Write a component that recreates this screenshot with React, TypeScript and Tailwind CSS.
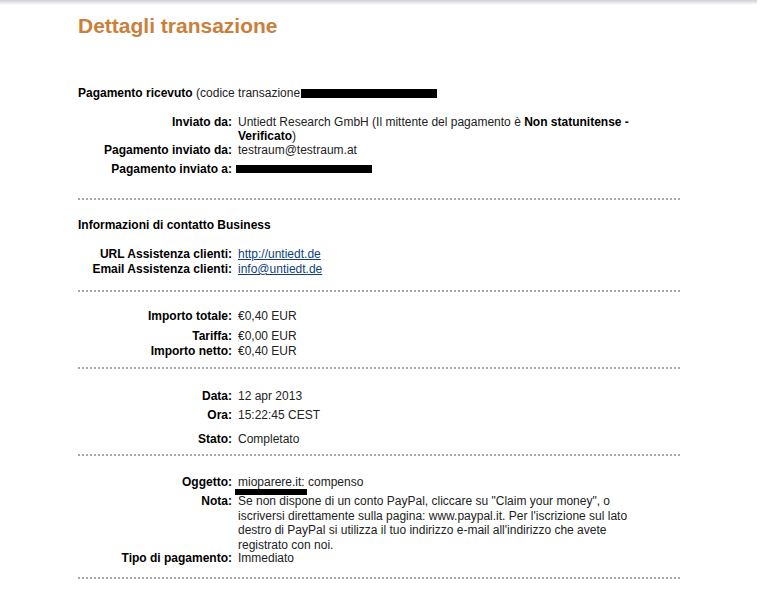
const font = { fontFamily: '"Liberation Sans", Arial, sans-serif' }

function Row({ label, children, className = '' }: { label: string; children: React.ReactNode; className?: string }) {
  return (
    <div className={`flex leading-[14px] ${className}`}>
      <div className="w-[154px] shrink-0 text-right font-bold text-black">{label}</div>
      <div className="ml-[6px] w-[400px] text-[#222]">{children}</div>
    </div>
  )
}

function Dots({ className = '' }: { className?: string }) {
  return <div className={`w-[602px] border-t-2 border-dotted border-[#a8a8a8] ${className}`} />
}

export default function App() {
  return (
    <div className="min-h-[592px] w-[760px] bg-white text-[12px]" style={font}>
      <div className="h-[5px] w-[757px] bg-gradient-to-b from-[#cdd0d6] to-white" />
      <div className="pl-[78px]">
        <h1 className="mt-[9px] text-[21px] font-bold leading-[24px] text-[#ca7f3b]">Dettagli transazione</h1>

        <div className="mt-[48px] leading-[14px] text-[#222]">
          <span className="font-bold text-black">Pagamento ricevuto</span> (codice transazione
          <span className="ml-[1px] inline-block h-[9px] w-[136px] bg-black align-[-1px]" />
        </div>

        <Row label="Inviato da:" className="mt-[15px]">
          <span>Untiedt Research GmbH (Il mittente del pagamento è </span>
          <b className="text-black">Non statunitense - Verificato</b>)
        </Row>
        <Row label="Pagamento inviato da:">testraum@testraum.at</Row>
        <Row label="Pagamento inviato a:" className="mt-[5px]">
          <span className="ml-[-2px] inline-block h-[8px] w-[136px] bg-black align-[0px]" />
        </Row>

        <Dots className="mt-[22px]" />

        <div className="mt-[18px] font-bold leading-[14px] text-black">Informazioni di contatto Business</div>

        <Row label="URL Assistenza clienti:" className="mt-[15px]">
          <a href="#" className="text-[#0f3f7e] underline">http://untiedt.de</a>
        </Row>
        <Row label="Email Assistenza clienti:" className="mt-[1px]">
          <a href="#" className="text-[#0f3f7e] underline">info@untiedt.de</a>
        </Row>

        <Dots className="mt-[14px]" />

        <Row label="Importo totale:" className="mt-[17px]">€0,40 EUR</Row>
        <Row label="Tariffa:" className="mt-[6px]">€0,00 EUR</Row>
        <Row label="Importo netto:" className="mt-[1px]">€0,40 EUR</Row>

        <Dots className="mt-[9px]" />

        <Row label="Data:" className="mt-[20px]">12 apr 2013</Row>
        <Row label="Ora:" className="mt-[5px]">15:22:45 CEST</Row>
        <Row label="Stato:" className="mt-[10px]">Completato</Row>

        <Dots className="mt-[8px]" />

        <Row label="Oggetto:" className="mt-[19px]">
          <span className="relative">
            mioparere.it: compenso
            <span className="absolute left-[-3px] top-[14px] h-[6px] w-[72px] bg-black" />
          </span>
        </Row>
        <Row label="Nota:" className="mt-[5px] !leading-[14.7px]">
          Se non dispone di un conto PayPal, cliccare su "Claim your money", o iscriversi direttamente sulla pagina: www.paypal.it. Per l'iscrizione sul lato destro di PayPal si utilizza il tuo indirizzo e-mail all'indirizzo che avete registrato con noi.
        </Row>
        <Row label="Tipo di pagamento:" className="mt-[-2px]">Immediato</Row>

        <Dots className="mt-[12px]" />
      </div>
    </div>
  )
}
